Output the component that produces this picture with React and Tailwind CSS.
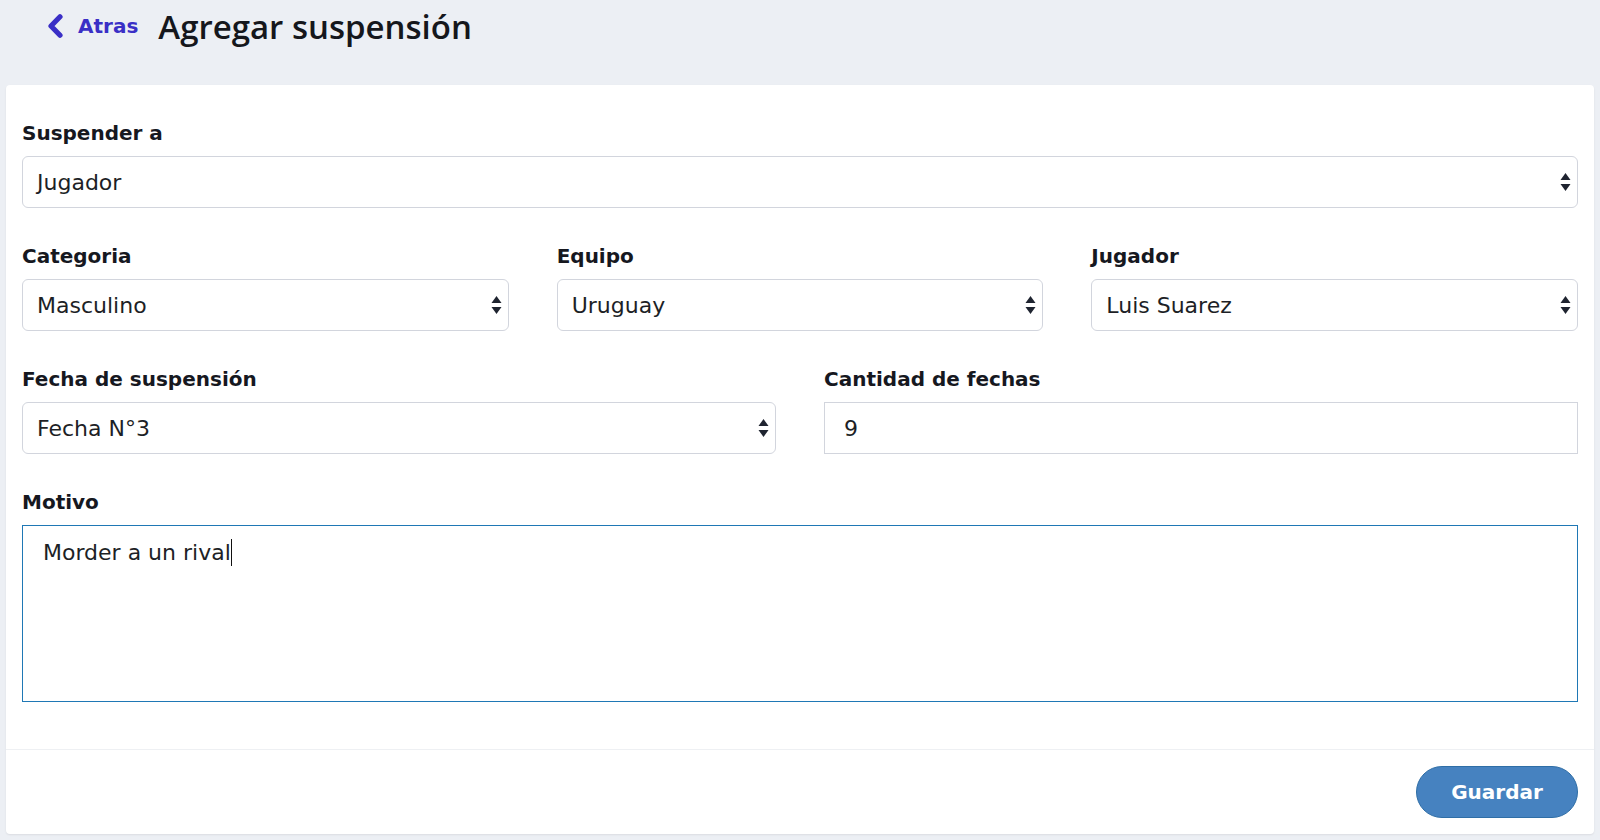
import React from 'react';

const formFont = { fontFamily: '"DejaVu Sans", "Noto Sans", sans-serif' };

function SortArrows() {
  return (
    <svg width="11" height="20" viewBox="0 0 11 20" className="shrink-0">
      <path d="M5.5 1 L10.5 8 L0.5 8 Z" fill="#1f2430" />
      <path d="M5.5 19 L10.5 12 L0.5 12 Z" fill="#1f2430" />
    </svg>
  );
}

function Label({ children }) {
  return <label className="block text-[20px] leading-6 font-bold text-[#16181f] mb-[11px]">{children}</label>;
}

function SelectBox({ value }) {
  return (
    <div className="flex items-center justify-between h-[52px] pl-[14px] pr-[6px] border border-[#d2d5dd] rounded-[6px] bg-white">
      <span className="text-[22px] text-[#1d1f26]">{value}</span>
      <SortArrows />
    </div>
  );
}

function Field({ label, children }) {
  return (
    <div className="mb-9">
      <Label>{label}</Label>
      {children}
    </div>
  );
}

export default function App() {
  return (
    <div className="min-h-screen w-full bg-[#eceff4] px-[6px] pb-[7px]" style={formFont}>
      {/* Header */}
      <div className="flex items-center h-[52px] pl-[41px]">
        <a className="flex items-center gap-[15px] text-[#3a2fc6] font-bold text-[20px]">
          <svg width="16" height="24" viewBox="0 0 16 24">
            <polyline points="13,2.8 4,12 13,21.2" fill="none" stroke="#3a2fc6" strokeWidth="5.2" strokeLinecap="round" strokeLinejoin="round" />
          </svg>
          <span>Atras</span>
        </a>
        <h1
          className="ml-[20px] text-[33px] font-semibold text-[#15171c] leading-none"
          style={{ fontFamily: '"Open Sans", "Noto Sans", sans-serif' }}
        >
          Agregar suspensión
        </h1>
      </div>

      {/* Card */}
      <div className="mt-[33px] bg-white rounded-[4px] shadow-[0_1px_2px_rgba(0,0,0,0.08)]">
        <div className="px-4 pt-9 pb-[11px]">
          <Field label="Suspender a">
            <SelectBox value="Jugador" />
          </Field>

          <div className="grid grid-cols-3 gap-x-12">
            <Field label="Categoria">
              <SelectBox value="Masculino" />
            </Field>
            <Field label="Equipo">
              <SelectBox value="Uruguay" />
            </Field>
            <Field label="Jugador">
              <SelectBox value="Luis Suarez" />
            </Field>
          </div>

          <div className="grid grid-cols-2 gap-x-12">
            <Field label="Fecha de suspensión">
              <SelectBox value="Fecha N°3" />
            </Field>
            <Field label="Cantidad de fechas">
              <div className="flex items-center h-[52px] pl-[19px] border border-[#d2d5dd] bg-white">
                <span className="text-[22px] text-[#1d1f26]">9</span>
              </div>
            </Field>
          </div>

          <Field label="Motivo">
            <div className="h-[177px] border border-[#1f78b5] px-[20px] pt-[13px]">
              <span className="text-[22px] leading-7 text-[#1d1f26]">Morder a un rival</span>
              <span className="inline-block w-px h-[27px] bg-[#111] align-[-6px]"></span>
            </div>
          </Field>
        </div>

        {/* Footer */}
        <div className="flex justify-end border-t border-[#eef0f3] px-4 py-4">
          <button className="h-[52px] w-[162px] rounded-full bg-[#4682c0] border border-[#2f6ea6] text-white text-[20px] font-bold">
            Guardar
          </button>
        </div>
      </div>
    </div>
  );
}
